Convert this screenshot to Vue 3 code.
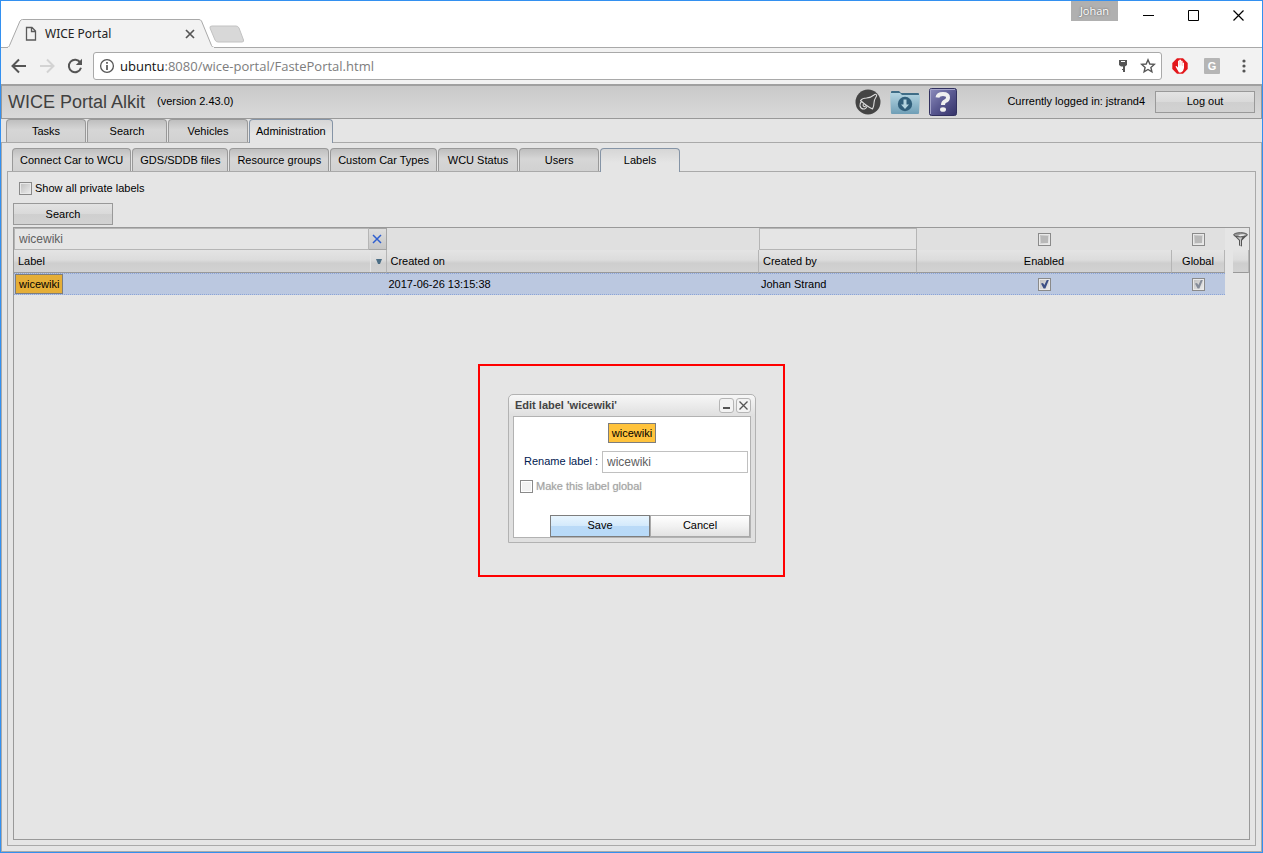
<script setup>
import { ref } from 'vue'

const mainTabs = ['Tasks', 'Search', 'Vehicles', 'Administration']
const subTabs = ['Connect Car to WCU', 'GDS/SDDB files', 'Resource groups', 'Custom Car Types', 'WCU Status', 'Users', 'Labels']
const activeMain = ref('Administration')
const activeSub = ref('Labels')
const filterLabel = ref('wicewiki')
const filterCreator = ref('')
const newName = ref('wicewiki')
const showAll = ref(false)
const rows = ref([
  { label: 'wicewiki', created: '2017-06-26 13:15:38', by: 'Johan Strand', enabled: true, global: true }
])
</script>

<template>
  <div class="window">
    <header class="titlebar">
      <div class="browser-tab">
        <svg class="tab-shape" width="208" height="29" viewBox="0 0 208 29" aria-hidden="true">
          <path d="M0 28.5 L1.500 28 Q2 27.500 2.500 26.500 L13 2 Q14 .5 15.500 .5 H192 Q193.500 .5 194.500 2 L204.500 26.500 Q205 28 207 28.500" fill="#f2f2f2" stroke="#a9a9a9" />
          <path d="M1 28.500H207" stroke="#f2f2f2" />
        </svg>
        <svg class="page-icon" width="12" height="16" viewBox="0 0 12 16" fill="none" stroke="#5a5a5a" stroke-width="1.300" aria-hidden="true">
          <path d="M1.500 1.500H7L10.500 5V14H1.500Z M6.500 1.500V5.500H10.500" />
        </svg>
        <span class="tab-title">WICE Portal</span>
        <button class="plain tab-close" aria-label="Close tab">
          <svg width="10" height="10" viewBox="0 0 10 10" stroke="#555" stroke-width="1.700"><path d="M1 1L9 9M9 1L1 9" /></svg>
        </button>
      </div>
      <button class="plain new-tab" aria-label="New tab">
        <svg width="36" height="19" viewBox="0 0 36 19"><path d="M3 1H27Q29 1 30 3L34.500 15Q35 17 33 17H9Q7 17 6 15L1 3Q.5 1 3 1Z" fill="#d8d8d8" stroke="#c2c2c2" /></svg>
      </button>
      <span class="spacer"></span>
      <button class="profile">Johan</button>
      <div class="win-controls">
        <button class="plain" aria-label="Minimize"><svg width="11" height="11" viewBox="0 0 11 11"><path d="M0 5.500H11" stroke="#000" /></svg></button>
        <button class="plain" aria-label="Maximize"><svg width="11" height="11" viewBox="0 0 11 11"><path d="M.5.5H10.500V10.500H.5Z" fill="none" stroke="#000" /></svg></button>
        <button class="plain" aria-label="Close"><svg width="11" height="11" viewBox="0 0 11 11"><path d="M.5.5L10.500 10.500M10.500.5L.5 10.500" stroke="#000" stroke-width="1.200" /></svg></button>
      </div>
    </header>

    <nav class="toolbar">
      <button class="plain" aria-label="Back">
        <svg width="16" height="16" viewBox="0 0 16 16" fill="none" stroke="#555" stroke-width="2"><path d="M15 8H2M8 1.500L1.500 8L8 14.500" /></svg>
      </button>
      <button class="plain" aria-label="Forward">
        <svg width="16" height="16" viewBox="0 0 16 16" fill="none" stroke="#d3d3d3" stroke-width="2"><path d="M1 8H14M8 1.500L14.500 8L8 14.500" /></svg>
      </button>
      <button class="plain" aria-label="Reload">
        <svg width="16" height="16" viewBox="0 0 16 16"><path d="M13.300 4.600A6.200 6.200 0 1 0 14 9.800" fill="none" stroke="#555" stroke-width="2" /><path d="M15 .8V7H8.800Z" fill="#555" /></svg>
      </button>
      <div class="omnibox">
        <svg width="16" height="16" viewBox="0 0 16 16" fill="none" stroke="#555" aria-hidden="true"><circle cx="8" cy="8" r="6.400" stroke-width="1.300" /><path d="M8 7V12M8 4V5.700" stroke-width="1.700" /></svg>
        <span class="url"><b>ubuntu</b>:8080/wice-portal/FastePortal.html</span>
        <svg width="10" height="14" viewBox="0 0 10 14" aria-hidden="true"><path d="M1 1H9V6L7 7.500V13H5V11H4V10H5V7.500H3L1 6Z" fill="#555" /><path d="M3 2.500H7" stroke="#fff" /></svg>
        <svg class="star" width="16" height="16" viewBox="0 0 16 16" aria-hidden="true"><path d="M8 1.800L9.800 6L14.300 6.400L10.900 9.400L11.900 13.800L8 11.500L4.100 13.800L5.100 9.400L1.700 6.400L6.200 6Z" fill="none" stroke="#555" stroke-width="1.400" /></svg>
      </div>
      <button class="plain ext" aria-label="Ad blocker">
        <svg width="16" height="16" viewBox="0 0 16 16"><path d="M5 .3H11L15.700 5V11L11 15.700H5L.3 11V5Z" fill="#e3171b" /><path d="M3.500 8.500L4.500 8L6 9.500V3Q6.500 2 7.200 3V2Q8.200 1 9 2V3Q10 2 10.600 3V5Q11.700 4 12 5V10Q11.500 13.500 9 14.500H7Z" fill="#fff" /><path d="M7.300 3V7.500M9 3V7.500M10.600 4.500V8" stroke="#f0a0a0" stroke-width=".5" /></svg>
      </button>
      <button class="g-ext" aria-label="G extension">G</button>
      <button class="plain menu" aria-label="Menu">
        <svg width="4" height="14" viewBox="0 0 4 14" fill="#555"><circle cx="2" cy="2" r="1.600" /><circle cx="2" cy="7" r="1.600" /><circle cx="2" cy="12" r="1.600" /></svg>
      </button>
    </nav>

    <div class="app">
      <header class="app-head">
        <h1>WICE Portal Alkit</h1>
        <span class="version">(version 2.43.0)</span>
        <span class="spacer"></span>
        <div class="head-icons">
          <button class="plain" aria-label="Notifications">
            <svg width="26" height="26" viewBox="0 0 26 26"><circle cx="13" cy="13" r="12.500" fill="#444" /><g fill="none" stroke="#dcdcdc" stroke-width="1.100" stroke-linejoin="round"><path d="M19 6Q20.500 4.500 21.500 6Q22 7 21 8Q19 11 19 14Q19 17 17.500 20Q12 17.500 5.500 11.500Q7.500 9 11.500 9Q16 8.500 19 6Z" /><path d="M6.500 12.500Q4.500 14.500 5 17Q6 20.500 9.500 20Q11 19.500 12 17.500M8.500 15Q7.500 16.500 9 17.500Q10 18 11 16.500" /></g></svg>
          </button>
          <button class="plain" aria-label="Downloads">
            <svg width="30" height="26" viewBox="0 0 30 26">
              <defs><linearGradient id="folder" x2="0" y2="1"><stop stop-color="#b4d5e2" /><stop offset="1" stop-color="#6f9eb6" /></linearGradient></defs>
              <path d="M1 3Q1 2 2 2H9L11 4H28Q29 4 29 5V12H1Z" fill="#3f6d87" />
              <path d="M0 4H10L12 6H30L29 24Q29 25 28 25H2Q1 25 1 24Z" fill="url(#folder)" />
              <circle cx="15" cy="15" r="7.200" fill="#315f7b" /><path d="M13.500 10.500H16.500V15.500H19L15 20L11 15.500H13.500Z" fill="#b4d3df" />
            </svg>
          </button>
          <button class="plain" aria-label="Help">
            <svg width="28" height="28" viewBox="0 0 28 28">
              <defs><linearGradient id="help" x2="1" y2="1"><stop stop-color="#8f8fbe" /><stop offset=".5" stop-color="#5a5991" /><stop offset="1" stop-color="#343268" /></linearGradient></defs>
              <rect x=".5" y=".5" width="27" height="27" rx="2" fill="url(#help)" stroke="#31305f" /><path d="M1.500 26V1.500H26" fill="none" stroke="#a5a5ca" />
              <path d="M8.500 9.500Q9 6 14 6Q19 6 19 9.500Q19 12 16.500 13Q14 14 14 17" fill="none" stroke="#f0f0f0" stroke-width="4" /><ellipse cx="14" cy="21.500" rx="3" ry="2.300" fill="#f0f0f0" />
            </svg>
          </button>
        </div>
        <span class="login">Currently logged in: jstrand4</span>
        <button class="btn">Log out</button>
      </header>

      <div class="tabs main-tabs" role="tablist">
        <button v-for="t in mainTabs" :key="t" role="tab" class="tab" :class="{ on: t === activeMain }" @click="activeMain = t">{{ t }}</button>
      </div>

      <main class="outer-panel">
        <div class="tabs sub-tabs" role="tablist">
          <button v-for="t in subTabs" :key="t" role="tab" class="tab" :class="{ on: t === activeSub }" @click="activeSub = t">{{ t }}</button>
        </div>
        <section class="inner-panel">
          <label class="check-line"><input v-model="showAll" type="checkbox" class="check" />Show all private labels</label>
          <button class="btn search-btn">Search</button>
          <div class="grid">
            <table>
              <colgroup><col /><col /><col class="c-by" /><col class="c-enabled" /><col class="c-global" /></colgroup>
              <thead>
                <tr class="filters">
                  <td>
                    <div class="filter-cell">
                      <input v-model="filterLabel" type="text" aria-label="Filter label" />
                      <button class="clear" aria-label="Clear filter" @click="filterLabel = ''">
                        <svg width="10" height="10" viewBox="0 0 10 10" stroke="#2f5fd0" stroke-width="1.500"><path d="M1 1L9 9M9 1L1 9" /></svg>
                      </button>
                    </div>
                  </td>
                  <td></td>
                  <td><div class="filter-cell"><input v-model="filterCreator" type="text" aria-label="Filter created by" /></div></td>
                  <td class="mid"><input type="checkbox" class="check unset" aria-label="Filter enabled" /></td>
                  <td class="mid"><input type="checkbox" class="check unset" aria-label="Filter global" /></td>
                </tr>
                <tr class="heads">
                  <th><div class="sorted"><span>Label</span><i><svg width="6" height="5" viewBox="0 0 6 5"><path d="M0 0H6L4 5H2Z" fill="#4c6e85" /></svg></i></div></th>
                  <th>Created on</th>
                  <th>Created by</th>
                  <th class="mid">Enabled</th>
                  <th class="mid">Global</th>
                </tr>
              </thead>
              <tbody>
                <tr v-for="r in rows" :key="r.label">
                  <td><span class="chip">{{ r.label }}</span></td>
                  <td>{{ r.created }}</td>
                  <td>{{ r.by }}</td>
                  <td class="mid"><input v-model="r.enabled" type="checkbox" class="check" aria-label="Enabled" /></td>
                  <td class="mid"><input v-model="r.global" type="checkbox" class="check" disabled aria-label="Global" /></td>
                </tr>
              </tbody>
            </table>
            <div class="grid-side">
              <button class="plain funnel" aria-label="Filter">
                <svg width="15" height="15" viewBox="0 0 15 15">
                  <path d="M.5 3L6 8.500V13.500L9 14.500V8.500L14.500 3Z" fill="#555" /><path d="M3.500 4.500L7 8V13.500L8 13.800V8L9.500 5Z" fill="#ccc" /><ellipse cx="7.500" cy="2.800" rx="6.800" ry="2.100" fill="#999" stroke="#555" /><path d="M5 3.500Q9 1.500 12.500 2.500Q11 4.300 7 4.300Z" fill="#eee" />
                </svg>
              </button>
              <div class="side-head"></div>
            </div>
          </div>
        </section>
      </main>

      <div class="overlay">
        <div class="highlight">
          <form class="dialog" role="dialog" aria-labelledby="dlg-title" @submit.prevent>
            <div class="dialog-head">
              <h2 id="dlg-title">Edit label 'wicewiki'</h2>
              <button type="button" aria-label="Minimize dialog"><svg width="13" height="13" viewBox="0 0 13 13"><path d="M3 9H10" stroke="#555" stroke-width="2" /></svg></button>
              <button type="button" aria-label="Close dialog"><svg width="13" height="13" viewBox="0 0 13 13"><path d="M2.500 2.500L10.500 10.500M10.500 2.500L2.500 10.500" stroke="#555" stroke-width="1.300" /></svg></button>
            </div>
            <div class="dialog-body">
              <span class="chip bright">wicewiki</span>
              <div class="field">
                <label for="rename">Rename label :</label>
                <input id="rename" v-model="newName" type="text" />
              </div>
              <label class="make-global"><input type="checkbox" class="check" disabled />Make this label global</label>
              <div class="actions">
                <button type="submit" class="btn save">Save</button>
                <button type="button" class="btn cancel">Cancel</button>
              </div>
            </div>
          </form>
        </div>
      </div>
    </div>
  </div>
</template>

<style>
html, body { margin: 0; background: #e5e5e5; }
</style>

<style scoped>
* { box-sizing: border-box; }
.window {
  min-height: 100vh; border: 1px solid #3390f0; display: flex; flex-direction: column;
  font-family: "Liberation Sans", Arial, sans-serif; font-size: 11px; line-height: 13px; color: #000; background: #e5e5e5;
}
button, input { font: inherit; color: inherit; margin: 0; }
button { cursor: default; }
svg { display: block; flex: none; }
.plain { border: 0; padding: 0; background: none; display: flex; align-items: center; justify-content: center; }
.spacer { flex: 1; }

.titlebar { display: flex; height: 47px; background: #fff; border-bottom: 1px solid #a9a9a9; padding: 0 1px 0 6px; }
.browser-tab { position: relative; display: flex; align-items: center; width: 200px; height: 29px; margin-top: 18px; padding: 0 12px 0 18px; }
.tab-shape { position: absolute; left: 0; top: 0; }
.page-icon { position: relative; }
.tab-title { position: relative; flex: 1; margin-left: 8px; font: 12px/16px "Noto Sans", "Open Sans", sans-serif; color: #222; }
.tab-close { position: relative; }
.new-tab { align-self: flex-end; margin: 0 0 3px 2px; }
.profile { border: 0; padding: 0; width: 47px; height: 20px; background: #b0b0b0; color: #fff; font: 11px/18px "Open Sans", "Noto Sans", sans-serif; text-shadow: 0 0 2px #555; }
.win-controls { display: flex; height: 28px; margin-left: 8px; }
.win-controls button { width: 45px; }

.toolbar { display: flex; align-items: center; height: 36px; padding: 0 16px 0 10px; gap: 12px; background: #f2f2f2; }
.omnibox { flex: 1; display: flex; align-items: center; height: 28px; padding: 0 5px; margin-left: -2px; border: 1px solid #a9a9a9; border-radius: 3px; background: #fff; }
.url { flex: 1; margin-left: 5px; font: 13px/20px "Open Sans", "Noto Sans", sans-serif; color: #7d7d7d; }
.url b { font-weight: 400; color: #111; }
.star { margin-left: 12px; }
.ext { margin-left: -2px; }
.g-ext { width: 16px; height: 16px; margin: 0 10px 0 4px; border: 0; border-radius: 1px; padding: 0; background: #b5b5b5; color: #fff; font-size: 11px; font-weight: 700; line-height: 16px; }

.app { position: relative; flex: 1; display: flex; flex-direction: column; }
.app-head {
  display: flex; align-items: center; height: 35px; padding: 0 6px 1px;
  border: 1px solid #999; border-top: 2px solid #a0a0a0; background: linear-gradient(#c9c9c9, #d9d9d9);
}
h1 { margin: 0; font-size: 18px; line-height: 22px; font-weight: 400; color: #404040; }
.version { margin-left: 12px; }
.head-icons { display: flex; align-items: center; gap: 9px; margin-right: 50px; }
.login { margin-right: 10px; }
.btn { width: 100px; height: 22px; border: 1px solid #999; padding: 0; background: linear-gradient(#e3e3e3, #d9d9d9 50%, #cfcfcf 50%, #d2d2d2); }

.tabs { display: flex; gap: 1px; height: 24px; position: relative; z-index: 1; }
.tab { min-width: 80px; height: 23px; padding: 0 7px; border: 1px solid #999; border-bottom: 0; border-radius: 4px 4px 0 0; background: linear-gradient(#bfbfbf, #d6d6d6 45%, #d1d1d1); white-space: nowrap; }
.tab.on { height: 24px; border-color: #8594a6; background: linear-gradient(#d6d6d6, #e5e5e5 60%); }
.main-tabs { padding-left: 5px; }
.main-tabs .tab { padding: 0 6px; }
.sub-tabs { padding-left: 5px; }
.outer-panel { flex: 1; display: flex; flex-direction: column; margin-top: -1px; padding: 5px; border: 1px solid #a9a9a9; }
.inner-panel { flex: 1; display: flex; flex-direction: column; margin-top: -1px; padding: 10px 5px 5px; border: 1px solid #a9a9a9; }
.check-line { display: flex; align-items: center; gap: 3px; height: 13px; margin-left: 6px; align-self: flex-start; }
.check {
  appearance: none; flex: none; display: block; width: 13px; height: 13px; border: 1px solid #8a8a8a;
  background: linear-gradient(135deg, #bdbdbd, #eee); box-shadow: inset 0 0 0 1px #e9e9e9; position: relative;
}
.check:checked::after { content: ""; position: absolute; left: 2px; top: 1px; width: 8px; height: 9px; background: #3c4f85; clip-path: polygon(0 45%, 25% 40%, 42% 62%, 75% 0, 100% 0, 55% 100%, 32% 100%); }
.check:checked:disabled::after { background: #858c99; }
.check.unset::after { content: ""; position: absolute; left: 2px; top: 2px; width: 7px; height: 7px; background: #b8b8b8; }
.search-btn { margin: 8px 0 2px; align-self: flex-start; }

.grid { flex: 1; display: flex; align-items: flex-start; border: 1px solid #999; }
table { flex: 1; table-layout: fixed; width: 0; border-collapse: separate; border-spacing: 0; }
.c-by { width: 158px; }
.c-enabled { width: 255px; }
.c-global { width: 53px; }
td, th { padding: 0; text-align: left; font-weight: 400; vertical-align: middle; }
.filters td { height: 22px; background: #e0e0e0; }
.filter-cell { display: flex; height: 22px; }
.filter-cell input { flex: 1; min-width: 0; padding: 0 4px; border: 1px solid #b5b5b5; background: #e5e5e5; font-size: 12px; color: #606060; outline: 0; }
.clear { width: 18px; padding: 0; border: 1px solid #a5a5a5; border-left: 0; background: linear-gradient(#dedede, #c6c6c6); display: flex; align-items: center; justify-content: center; }
.heads th { height: 23px; padding: 0 4px; border-right: 1px solid #b5b5b5; border-bottom: 1px solid #999; background: linear-gradient(#e4e4e4, #dcdcdc 45%, #cecece 60%, #d2d2d2); }
.sorted { display: flex; align-items: center; justify-content: space-between; }
.sorted i { display: flex; align-items: center; justify-content: flex-end; width: 12px; height: 22px; border-left: 1px solid #e4e4e4; }
tbody td { height: 22px; padding: 0 2px; background: #bbc8e0; border-top: 1px dotted #8ba4d8; border-bottom: 1px dotted #8ba4d8; }
tbody td:first-child { padding: 0 1px; }
.mid { text-align: center; }
.mid .check { margin: 0 auto; }
.chip { display: block; width: fit-content; height: 20px; padding: 0 3px; border: 1px solid #7d7d7d; background: #e5ae37; line-height: 18px; }
.grid-side { width: 24px; padding-left: 8px; }
.funnel { width: 15px; height: 22px; }
.side-head { height: 23px; border-right: 1px solid #b5b5b5; border-bottom: 1px solid #999; background: linear-gradient(#e4e4e4, #dcdcdc 45%, #cecece 60%, #d2d2d2); }

.overlay { position: absolute; inset: 0; z-index: 2; display: flex; align-items: center; justify-content: center; padding-top: 4px; }
.highlight { padding: 28px 27px 32px 28px; border: 2px solid #f00; }
.dialog { width: 248px; padding: 0 4px 4px; border: 1px solid #b2b2b2; border-radius: 5px 5px 0 0; background: linear-gradient(#f7f7f7, #e0e0e0 20px); }
.dialog-head { display: flex; align-items: center; gap: 2px; height: 21px; }
h2 { flex: 1; margin: 0 0 0 2px; font-size: 11px; line-height: 13px; font-weight: 700; color: #444; }
.dialog-head button { width: 15px; height: 15px; padding: 0; border: 1px solid #b5b5b5; border-radius: 3px; background: #f3f3f3; }
.dialog-body { display: flex; flex-direction: column; height: 122px; padding: 6px 0 0; border: 1px solid #b2b2b2; background: #fff; }
.bright { margin: 0 auto; background: #ffc33c; }
.field { display: flex; align-items: center; justify-content: flex-end; gap: 4px; margin: 8px 2px 7px 0; }
.field label { color: #002050; }
.field input { width: 146px; height: 22px; padding: 0 4px; border: 1px solid #c0c0c0; font-size: 12px; color: #606060; outline: 0; }
.make-global { display: flex; align-items: center; gap: 3px; margin-left: 6px; color: #a5a5a5; text-shadow: 0 0 1px #c5c5c5; }
.make-global .check { background: #f2f2f2; box-shadow: inset 0 0 0 1px #fff; }
.actions { display: flex; justify-content: flex-end; margin-top: auto; }
.save { border-color: #7d7d7d; background: linear-gradient(#e8f5fe, #d3e9fb 50%, #badaf7 50%, #b8daf8); }
.cancel { border-color: #a9a9a9; background: linear-gradient(#fff, #f2f2f2 50%, #e2e2e2); }
</style>
